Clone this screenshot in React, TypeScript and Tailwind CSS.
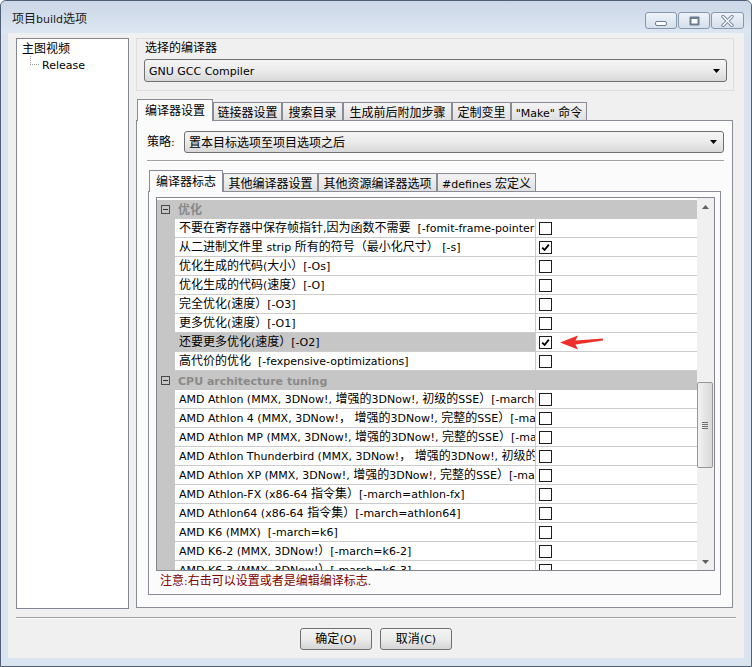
import React from "react";

// split text into CJK / latin runs: latin is drawn a bit smaller, like Tahoma 8pt next to SimSun 9pt
const CJK = /([\u2e80-\u9fff\uff00-\uffef]+)/;

function T({ s }: { s: string }) {
  return (
    <span className="whitespace-pre">
      {s.split(CJK).map((p, i) =>
        p === "" ? null : i % 2 ? (
          <span key={i} className="text-[12px]">{p}</span>
        ) : (
          <span key={i} className="text-[11px]">{p}</span>
        )
      )}
    </span>
  );
}

type Row = { h: string } | { t: string; on?: boolean; sel?: boolean };

const rows: Row[] = [
  { h: "优化" },
  { t: "不要在寄存器中保存帧指针,因为函数不需要  [-fomit-frame-pointer]" },
  { t: "从二进制文件里 strip 所有的符号（最小化尺寸） [-s]", on: true },
  { t: "优化生成的代码(大小）[-Os]" },
  { t: "优化生成的代码(速度）[-O]" },
  { t: "完全优化(速度）[-O3]" },
  { t: "更多优化(速度）[-O1]" },
  { t: "还要更多优化(速度）[-O2]", on: true, sel: true },
  { t: "高代价的优化  [-fexpensive-optimizations]" },
  { h: "CPU architecture tuning" },
  { t: "AMD Athlon (MMX, 3DNow!, 增强的3DNow!, 初级的SSE）[-march=athlon]" },
  { t: "AMD Athlon 4 (MMX, 3DNow!， 增强的3DNow!, 完整的SSE）[-march=athlon-4]" },
  { t: "AMD Athlon MP (MMX, 3DNow!, 增强的3DNow!, 完整的SSE）[-march=athlon-mp]" },
  { t: "AMD Athlon Thunderbird (MMX, 3DNow!， 增强的3DNow!, 初级的SSE）[-march=athlon-tbird]" },
  { t: "AMD Athlon XP (MMX, 3DNow!, 增强的3DNow!, 完整的SSE）[-march=athlon-xp]" },
  { t: "AMD Athlon-FX (x86-64 指令集）[-march=athlon-fx]" },
  { t: "AMD Athlon64 (x86-64 指令集）[-march=athlon64]" },
  { t: "AMD K6 (MMX)  [-march=k6]" },
  { t: "AMD K6-2 (MMX, 3DNow!）[-march=k6-2]" },
  { t: "AMD K6-3 (MMX, 3DNow!）[-march=k6-3]" },
];

function Combo({ text, className }: { text: string; className: string }) {
  return (
    <div className={`flex items-center rounded-[3px] border border-[#707070] bg-gradient-to-b from-[#f5f5f5] via-[#ebebeb] to-[#d8d8d8] ${className}`}>
      <div className="flex-1 pl-[4px] leading-[16px]">
        <T s={text} />
      </div>
      <svg width="7" height="4" viewBox="0 0 7 4" className="mr-[6px]">
        <path d="M0 0h7L3.5 4z" fill="#000" />
      </svg>
    </div>
  );
}

function Tab({ label, w, on }: { label: string; w: string; on?: boolean }) {
  if (on)
    return (
      <div className={`${w} relative z-10 -mb-px flex h-[22px] items-center justify-center border border-b-0 border-[#898c95] bg-[#fbfbfb] pb-[2px]`}>
        <T s={label} />
      </div>
    );
  return (
    <div className={`${w} flex h-[18px] items-center justify-center border border-b-0 border-[#898c95] bg-gradient-to-b from-[#f4f4f4] to-[#e0e0e0]`}>
      <T s={label} />
    </div>
  );
}

function Check({ on }: { on?: boolean }) {
  return (
    <div className="flex h-[13px] w-[13px] items-center justify-center border border-[#1e1e1e] bg-white">
      {on && (
        <svg width="9" height="9" viewBox="0 0 9 9">
          <path d="M1.2 4.6 L3.6 7 L7.8 1.6" fill="none" stroke="#000" strokeWidth="1.8" />
        </svg>
      )}
    </div>
  );
}

function PropRow({ r }: { r: Row }) {
  if ("h" in r)
    return (
      <div className="flex h-[19px] items-center bg-[#c6c6c6]">
        <div className="ml-[4px] flex h-[9px] w-[9px] items-center justify-center border border-[#4a4a4a]">
          <div className="h-px w-[5px] bg-[#303030]" />
        </div>
        <div className="ml-[8px] font-bold leading-[16px] text-[#8a8a8a]">
          <T s={r.h} />
        </div>
      </div>
    );
  return (
    <div className="flex h-[19px]">
      <div className="w-[18px] bg-[#c6c6c6]" />
      <div className="flex flex-1 border-b border-[#cbcbcb]">
        <div className={`flex w-[361px] items-center overflow-hidden border-r border-[#cbcbcb] pl-[4px] leading-[16px] ${r.sel ? "bg-[#c6c6c6]" : ""}`}>
          <T s={r.t} />
        </div>
        <div className="flex flex-1 items-center pl-[3px]">
          <Check on={r.on} />
        </div>
      </div>
    </div>
  );
}

function CaptionButtons() {
  return (
    <div className="ml-auto mr-[7px] mt-[11px] flex gap-[1px]">
      <div className="flex h-[17px] w-[32px] items-center justify-center rounded-[3px] border border-[#8797ad] bg-gradient-to-b from-[#eef3f9] to-[#d5dfeb]">
        <svg width="12" height="5" viewBox="0 0 12 5" className="mt-[5px]">
          <rect x="0.5" y="0.5" width="11" height="4" rx="1.5" fill="#fff" stroke="#6b7b90" />
        </svg>
      </div>
      <div className="flex h-[17px] w-[32px] items-center justify-center rounded-[3px] border border-[#8797ad] bg-gradient-to-b from-[#eef3f9] to-[#d5dfeb]">
        <svg width="11" height="10" viewBox="0 0 11 10">
          <rect x="0.5" y="0.5" width="10" height="9" rx="1" fill="#6b7b90" />
          <rect x="2.5" y="3" width="6" height="4.5" fill="#fff" />
        </svg>
      </div>
      <div className="flex h-[17px] w-[33px] items-center justify-center rounded-[3px] border border-[#8797ad] bg-gradient-to-b from-[#eef3f9] to-[#d5dfeb]">
        <svg width="13" height="12" viewBox="0 0 13 12">
          <path d="M2 1.5 L11 10.5 M11 1.5 L2 10.5" stroke="#7b8ba0" strokeWidth="3.4" strokeLinecap="round" />
          <path d="M2 1.5 L11 10.5 M11 1.5 L2 10.5" stroke="#fff" strokeWidth="1.4" strokeLinecap="round" />
        </svg>
      </div>
    </div>
  );
}

export default function App() {
  return (
    <div className="h-[667px] w-[752px] bg-white font-['DejaVu_Sans','Noto_Sans_CJK_SC',sans-serif] leading-none text-black">
      <div className="flex h-[667px] w-[752px] flex-col rounded-t-[6px] border border-[#4f6075] bg-[#dae4f0]">
        {/* title bar */}
        <div className="flex h-[32px] items-start rounded-t-[6px] bg-gradient-to-b from-[#cbd7e7] to-[#dde7f2]">
          <div className="pl-[11px] pt-[9px] leading-[16px] text-[#1a1a1a]">
            <T s="项目build选项" />
          </div>
          <CaptionButtons />
        </div>

        {/* client area */}
        <div className="mx-[7px] flex h-[625px] flex-col bg-[#f0f0f0]">
          <div className="flex pl-[8px] pt-[5px]">
            {/* targets tree */}
            <div className="h-[571px] w-[113px] border border-[#828790] bg-white pl-[5px] pt-[1px]">
              <div className="h-[16px] leading-[16px]">
                <T s="主图视频" />
              </div>
              <div className="flex h-[16px] items-start">
                <div className="ml-[8px] h-[9px] w-[9px] border-b border-l border-dotted border-[#9a9a9a]" />
                <div className="ml-[3px] leading-[16px]">
                  <T s="Release" />
                </div>
              </div>
            </div>

            <div className="ml-[7px] flex w-[598px] flex-col">
              {/* compiler selection */}
              <div className="flex h-[53px] flex-col border border-[#dedede]">
                <div className="h-[16px] pl-[8px] leading-[16px]">
                  <T s="选择的编译器" />
                </div>
                <Combo text="GNU GCC Compiler" className="ml-[7px] mr-[6px] mt-[4px] h-[23px]" />
              </div>

              <div className="mt-[8px] flex h-[21px] items-end pl-[1px]">
                <Tab label="编译器设置" w="w-[76px]" on />
                <Tab label="链接器设置" w="w-[69px]" />
                <Tab label="搜索目录" w="w-[61px]" />
                <Tab label="生成前后附加步骤" w="w-[109px]" />
                <Tab label="定制变里" w="w-[59px]" />
                <Tab label={'"Make" 命令'} w="w-[76px]" />
              </div>

              <div className="flex h-[488px] w-[597px] flex-col border border-[#898c95] bg-[#fbfbfb]">
                <div className="mt-[10px] flex h-[22px] items-center">
                  <div className="w-[47px] pl-[10px] leading-[16px]">
                    <T s="策略:" />
                  </div>
                  <Combo text="置本目标选项至项目选项之后" className="h-[22px] w-[540px]" />
                </div>
                <div className="ml-[10px] mt-[7px] h-[2px] w-[577px] border-b border-t border-b-white border-t-[#a0a0a0]" />

                <div className="ml-[11px] mt-[8px] flex h-[21px] items-end pl-[1px]">
                  <Tab label="编译器标志" w="w-[74px]" on />
                  <Tab label="其他编译器设置" w="w-[95px]" />
                  <Tab label="其他资源编译器选项" w="w-[119px]" />
                  <Tab label="#defines 宏定义" w="w-[99px]" />
                </div>

                <div className="ml-[11px] h-[404px] w-[573px] border border-[#898c95] bg-[#fbfbfb] pl-[7px] pt-[5px]">
                  {/* property grid */}
                  <div className="relative flex h-[374px] w-[559px] border border-[#828790] bg-white">
                    <div className="flex-1 overflow-hidden pt-[2px]">
                      {rows.map((r, i) => (
                        <PropRow key={i} r={r} />
                      ))}
                    </div>
                    <div className="flex w-[17px] flex-col bg-[#f0f0f0]">
                      <div className="flex h-[17px] items-center justify-center">
                        <svg width="7" height="4" viewBox="0 0 7 4">
                          <path d="M0 4h7L3.5 0z" fill="#606060" />
                        </svg>
                      </div>
                      <div className="flex-1">
                        <div className="mt-[167px] flex h-[86px] w-[16px] items-center justify-center rounded-[2px] border border-[#979797] bg-gradient-to-r from-[#f2f2f2] to-[#d9d9d9]">
                          <div className="flex flex-col gap-[1px]">
                            <div className="h-px w-[6px] bg-[#707070]" />
                            <div className="h-px w-[6px] bg-[#707070]" />
                            <div className="h-px w-[6px] bg-[#707070]" />
                            <div className="h-px w-[6px] bg-[#707070]" />
                          </div>
                        </div>
                      </div>
                      <div className="flex h-[17px] items-center justify-center">
                        <svg width="7" height="4" viewBox="0 0 7 4">
                          <path d="M0 0h7L3.5 4z" fill="#606060" />
                        </svg>
                      </div>
                    </div>
                    {/* red annotation arrow */}
                    <svg width="44" height="15" viewBox="0 0 44 15" className="absolute left-[403px] top-[137px]">
                      <path d="M0 7.5 L18 0.5 L15.5 5.5 L43 3.5 L43 5.5 L15.5 9.5 L18 14.5 Z" fill="#ec2f2a" />
                    </svg>
                  </div>
                  <div className="mt-px h-[16px] pl-[4px] leading-[16px] text-[#800000]">
                    <T s="注意:右击可以设置或者是编辑编译标志." />
                  </div>
                </div>
              </div>
            </div>
          </div>

          <div className="mx-[8px] mt-[8px] h-[2px] border-b border-t border-b-white border-t-[#a0a0a0]" />

          <div className="mt-[9px] flex justify-center gap-[8px]">
            <div className="flex h-[22px] w-[72px] items-center justify-center rounded-[3px] border border-[#707070] bg-gradient-to-b from-[#f4f4f4] via-[#ebebeb] to-[#d5d5d5] leading-[16px]">
              <T s="确定(O)" />
            </div>
            <div className="flex h-[22px] w-[72px] items-center justify-center rounded-[3px] border border-[#707070] bg-gradient-to-b from-[#f4f4f4] via-[#ebebeb] to-[#d5d5d5] leading-[16px]">
              <T s="取消(C)" />
            </div>
          </div>
        </div>
      </div>
    </div>
  );
}
